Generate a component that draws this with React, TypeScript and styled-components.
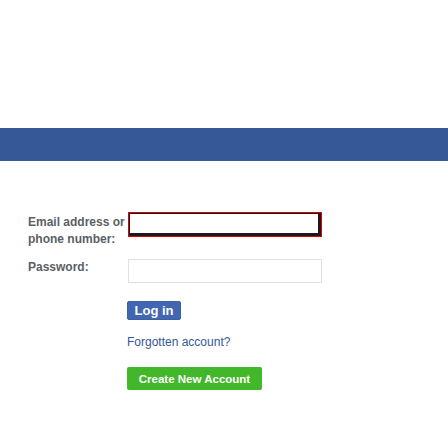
import React from 'react';
import styled, { createGlobalStyle } from 'styled-components';

const GlobalStyle = createGlobalStyle`
    body {
        margin: 0;
        background: #ffffff;
        font-family: 'Liberation Sans', Arial, sans-serif;
    }
`;

const Page = styled.div`
    padding-top: 128px;
`;

const TopBar = styled.div`
    height: 33px;
    background-color: #355896;
`;

const Form = styled.form`
    display: flex;
    flex-direction: column;
    padding: 51px 0 0 28px;
`;

const Row = styled.div<{ $gap?: number }>`
    display: flex;
    align-items: flex-start;
    margin-bottom: ${(p) => p.$gap ?? 0}px;
`;

const Label = styled.label<{ $offset?: number }>`
    width: 100px;
    padding-top: ${(p) => p.$offset ?? 0}px;
    font-size: 12px;
    line-height: 17px;
    font-weight: bold;
    color: #5a5f66;
`;

const Input = styled.input<{ $active?: boolean }>`
    box-sizing: border-box;
    width: 194px;
    height: ${(p) => (p.$active ? 25 : 24)}px;
    margin: 0;
    padding: 0 4px;
    background: #fff;
    outline: none;
    border: 1px solid ${(p) => (p.$active ? '#e00000' : '#dddfe2')};
    box-shadow: ${(p) => (p.$active ? 'inset 1px 1px 0 #1a1a1a, inset -3px -3px 0 #1a1a1a' : 'none')};
`;

const Actions = styled.div`
    display: flex;
    flex-direction: column;
    align-items: flex-start;
    padding-left: 99px;
`;

const LoginButton = styled.button`
    box-sizing: border-box;
    width: 54px;
    height: 19px;
    padding: 0;
    border: 1px solid #3c5f9e;
    border-radius: 2px;
    background-color: #4267b2;
    color: #fff;
    font-family: 'Liberation Sans', Arial, sans-serif;
    font-size: 13px;
    line-height: 17px;
    font-weight: bold;
`;

const ForgotLink = styled.a`
    margin-top: 15px;
    color: #365899;
    font-size: 12px;
    line-height: 14px;
    text-decoration: none;
`;

const CreateButton = styled.button`
    box-sizing: border-box;
    margin-top: 18px;
    width: 135px;
    height: 23px;
    padding: 0;
    border: none;
    border-radius: 2px;
    background-color: #42b72a;
    color: #fff;
    font-family: 'Liberation Sans', Arial, sans-serif;
    font-size: 11.5px;
    font-weight: bold;
`;

const App = () => {
    return (
        <Page>
            <GlobalStyle />
            <TopBar />
            <Form onSubmit={(e) => e.preventDefault()}>
                <Row $gap={11}>
                    <Label htmlFor="email" $offset={2}>
                        Email address or
                        <br />
                        phone number:
                    </Label>
                    <Input id="email" type="text" $active />
                </Row>
                <Row $gap={18}>
                    <Label htmlFor="pass">Password:</Label>
                    <Input id="pass" type="password" />
                </Row>
                <Actions>
                    <LoginButton type="submit">Log in</LoginButton>
                    <ForgotLink href="#">Forgotten account?</ForgotLink>
                    <CreateButton type="button">Create New Account</CreateButton>
                </Actions>
            </Form>
        </Page>
    );
};

export default App;
